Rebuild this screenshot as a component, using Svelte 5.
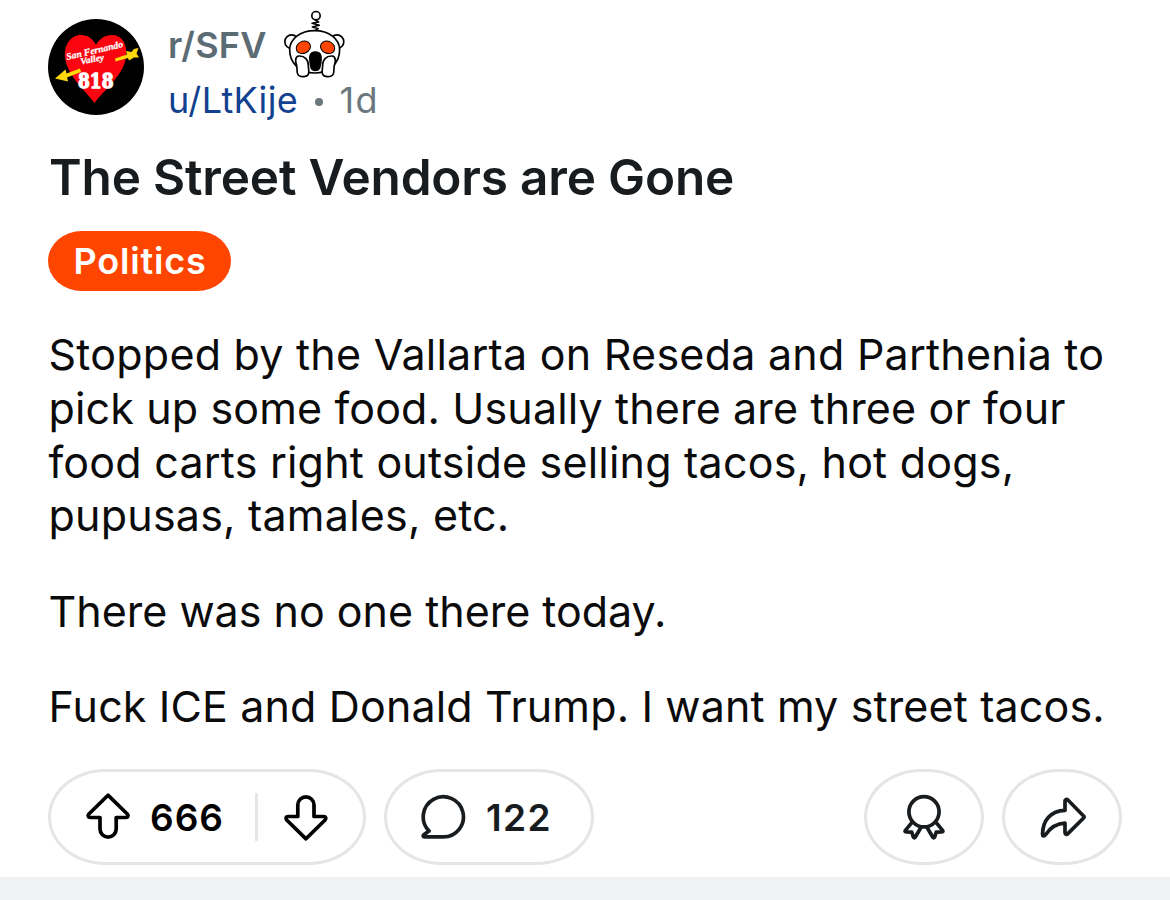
<script>
  const paragraphs = [
    [
      { text: 'Stopped by the Vallarta on Reseda and Parthenia to', spacing: 0.24 },
      { text: 'pick up some food. Usually there are three or four', spacing: 0.14 },
      { text: 'food carts right outside selling tacos, hot dogs,', spacing: 0.21 },
      { text: 'pupusas, tamales, etc.', spacing: 0.22 }
    ],
    [{ text: 'There was no one there today.', spacing: 0 }],
    [{ text: 'Fuck ICE and Donald Trump. I want my street tacos.', spacing: 0.14 }]
  ];
  const arrow =
    'M24 3.2 L4.9 22 C3.6 23.5 4.2 25.5 6.2 25.5 H16 V37 A8.1 8.1 0 0 0 32.2 37 V25.5 H42 C44 25.5 44.6 23.5 43.3 22 Z';
</script>

<article class="post">
  <header>
    <svg class="avatar" viewBox="0 0 96 96">
      <circle cx="48" cy="48" r="48" fill="#000" />
      <path d="M46.5 84 C38 72 19 57 17 38 C16 23 25 16 33 16 C40 16 45 20 48 26 C51 20 57 16 64 16 C73 16 80 24 78 38 C76 56 55 72 46.5 84Z" fill="#fb0610" />
      <path d="M32 49.5 L18.5 54.5 L17.5 50.5 L7 59.5 L20 62.5 L19 58.5 L33 53Z M67 39.5 L79 35.5 L78 32 L83.5 33 L86 30 L90.5 29 L88.5 34.5 L91 38.5 L86 38.5 L81 41.5 L80 39 L67.5 42.5Z" fill="#ffd90b" />
      <g fill="#fff" stroke="#fff" stroke-width=".25" font-family="'Liberation Serif', serif" font-weight="700" font-style="italic">
        <text transform="translate(19 41) rotate(-13)" font-size="9.5" textLength="58" lengthAdjust="spacingAndGlyphs">San Fernando</text>
        <text transform="translate(33 45.5) rotate(-11)" font-size="9" textLength="24" lengthAdjust="spacingAndGlyphs">Valley</text>
      </g>
      <text x="30" y="69" fill="#fff" stroke="#fff" stroke-width="1.3" font-family="'DejaVu Serif', serif" font-weight="700" font-size="21" textLength="35.5" lengthAdjust="spacingAndGlyphs">818</text>
    </svg>
    <div class="byline">
      <div class="community">
        <span class="sub">r/SFV</span>
        <svg class="snoo" viewBox="25 8 190 210" fill="#fff" stroke="#000" stroke-width="5" stroke-linecap="round" stroke-linejoin="round">
          <circle cx="124" cy="31" r="12.5" />
          <path d="M122 44 L132 50 L112 54 L134 60 L113 65 L131 70 L121 76" fill="none" stroke-width="4.5" />
          <circle cx="51" cy="109" r="20.5" />
          <circle cx="187" cy="109" r="20.5" />
          <path d="M120 76 C76 76 46 101 45 132 C44 175 77 203 120 203 C163 203 196 174 195 132 C194 101 164 76 120 76Z" />
          <ellipse cx="86" cy="126" rx="22" ry="18" transform="rotate(-25 86 126)" fill="#ff4500" stroke-width="3" />
          <ellipse cx="159" cy="126" rx="22" ry="18" transform="rotate(25 159 126)" fill="#ff4500" stroke-width="3" />
          <path d="M122 140 C107 140 104 151 106 166 C108 184 108 195 122 195 C136 195 136 184 139 166 C141 150 137 140 122 140Z" fill="#000" />
          <path d="M73 152 C60 153 62 170 66 181 C68 189 66 199 69 206 C73 216 97 217 101 207 C105 197 101 191 101 181 C102 164 90 151 73 152Z" />
          <path d="M172 152 C185 153 183 170 179 181 C177 189 179 199 176 206 C172 216 148 217 144 207 C140 197 144 191 144 181 C143 164 155 151 172 152Z" />
        </svg>
      </div>
      <div class="author"><span class="user">u/LtKije</span><i class="dot"></i><span class="age">1d</span></div>
    </div>
  </header>

  <h1>The Street Vendors are Gone</h1>
  <div class="flair"><span>Politics</span></div>

  <div class="body">
    {#each paragraphs as lines}
      <p>
        {#each lines as line}
          <span class="line" style="letter-spacing: {line.spacing}px">{line.text}</span>
        {/each}
      </p>
    {/each}
  </div>

  <footer>
    <div class="pill votes">
      <svg class="icon up" viewBox="0 0 48 48"><path d={arrow} /></svg>
      <span class="count score">666</span>
      <i class="divider"></i>
      <svg class="icon down" viewBox="0 0 48 48"><path d={arrow} transform="rotate(180 24 24)" /></svg>
    </div>
    <div class="pill comments">
      <svg class="icon" viewBox="0 0 48 48"><path d="M24 43.9 H5.4 C4 43.9 3.8 42.6 4.8 41.8 L10 37.9 A20.1 20.1 0 1 1 24 43.9Z" /></svg>
      <span class="count">122</span>
    </div>
    <div class="pill round award">
      <svg class="icon" viewBox="0 0 48 48"><circle cx="24" cy="18.8" r="15.1" /><path d="M12.4 28.9 L5.2 37.6 Q4.6 38.8 6 38.8 L11.8 39.2 L13.4 44.2 Q14.3 45.4 15.2 44.2 L21.2 34 M35.6 28.9 L42.8 37.6 Q43.4 38.8 42 38.8 L36.2 39.2 L34.6 44.2 Q33.7 45.4 32.8 44.2 L26.8 34" /></svg>
    </div>
    <div class="pill round">
      <svg class="icon" viewBox="0 0 48 48"><path d="M27 17.4 V8 C27 6.3 28.7 5.8 29.9 7 L45.6 23 Q46.5 24 45.6 25 L29.9 40.6 C28.7 41.8 27 41.3 27 39.6 V30.2 C18.5 30.4 12.6 34.3 7.3 42 C6.2 43.5 4.5 43.2 4.5 41.2 C4.8 27.5 12.5 17.9 27 17.4Z" /></svg>
    </div>
  </footer>
</article>
<div class="gap"></div>

<style>
  :global(body) { margin: 0; background: #fff; }
  .post {
    box-sizing: border-box;
    width: 1170px;
    height: 877px;
    padding: 8px 48px 0;
    display: flex;
    flex-direction: column;
    font-family: Inter, 'Liberation Sans', sans-serif;
    color: #0b0b0c;
    white-space: nowrap;
    overflow: hidden;
  }
  .gap { height: 23px; background: #f1f2f4; }
  header { display: flex; height: 118px; }
  .avatar { width: 96px; height: 96px; margin-top: 11px; flex: none; }
  .byline { margin-left: 24px; font-size: 36px; line-height: 44px; }
  .community { display: flex; height: 70px; }
  .sub { width: 115px; margin-top: 14.5px; font-weight: 560; letter-spacing: .2px; color: #5c6c74; }
  .snoo { width: 63.3px; height: 70px; }
  .author { display: flex; align-items: center; height: 44px; color: #6a777d; }
  .user { color: #11418f; letter-spacing: .3px; }
  .age { letter-spacing: 1.5px; }
  .dot { width: 8px; height: 8px; border-radius: 50%; background: #6a777d; margin: 3px 16.5px 0 17px; }
  h1 { margin: 21px 0 0 1px; font-size: 49.5px; line-height: 60px; font-weight: 600; letter-spacing: -.18px; color: #181c1f; }
  .flair {
    box-sizing: border-box; width: 183px; height: 60px; margin-top: 24px; padding-left: 1px;
    display: flex; align-items: center; justify-content: center;
    border-radius: 34px / 30px; background: #ff4500; color: #fff;
    font-size: 36px; line-height: 44px; font-weight: 600; letter-spacing: .8px;
  }
  .body { margin: 37px 0 0 .5px; font-size: 43px; line-height: 53.8px; }
  p { margin: 0 0 41.5px; }
  .line { display: block; }
  footer { display: flex; margin-top: -6px; }
  .pill {
    box-sizing: border-box; height: 96px; display: flex; align-items: center;
    border: 3px solid #e5e5e6; border-radius: 57px / 48px;
  }
  .votes { width: 318px; padding-left: 33px; margin-right: 18px; }
  .comments { width: 210px; padding-left: 32px; margin-right: auto; color: #181c1f; }
  .round { width: 120px; justify-content: center; }
  .award { margin-right: 18px; }
  .icon { width: 48px; height: 48px; flex: none; fill: none; stroke: #181c1f; stroke-width: 3.7; stroke-linejoin: round; stroke-linecap: round; }
  .votes .icon { stroke: #000; }
  .up { margin-top: -3px; }
  .down { margin-left: 24px; margin-top: 2px; }
  .count { margin: 2px 0 0 19px; font-size: 37px; line-height: 44px; font-weight: 600; letter-spacing: 1px; }
  .comments .count { letter-spacing: 1.4px; }
  .score { width: 105px; margin-left: 18px; color: #000; }
  .divider { width: 3px; height: 48px; background: #e5e5e6; }
</style>
